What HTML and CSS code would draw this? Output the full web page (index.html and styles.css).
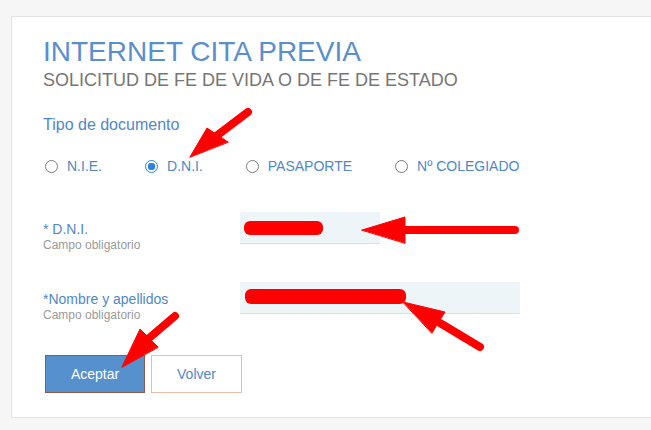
FILE: index.html
```html
<!DOCTYPE html>
<html lang="es">
<head>
<meta charset="UTF-8">
<meta name="viewport" content="width=device-width, initial-scale=1.0">
<title>Internet Cita Previa</title>
<link rel="stylesheet" href="styles.css">
</head>
<body>
<div class="panel">
    <h1>INTERNET CITA PREVIA</h1>
    <h2>SOLICITUD DE FE DE VIDA O DE FE DE ESTADO</h2>

    <p class="group-title">Tipo de documento</p>
    <div class="doc-types">
        <label class="doc-type"><input type="radio" name="tipo" value="nie"><span>N.I.E.</span></label>
        <label class="doc-type"><input type="radio" name="tipo" value="dni" checked><span>D.N.I.</span></label>
        <label class="doc-type"><input type="radio" name="tipo" value="pas"><span>PASAPORTE</span></label>
        <label class="doc-type"><input type="radio" name="tipo" value="col"><span>Nº COLEGIADO</span></label>
    </div>

    <div class="field">
        <div class="field-label">
            <label for="dni">* D.N.I.</label>
            <small>Campo obligatorio</small>
        </div>
        <input id="dni" class="input-short" type="text">
    </div>

    <div class="field">
        <div class="field-label">
            <label for="nombre">*Nombre y apellidos</label>
            <small>Campo obligatorio</small>
        </div>
        <input id="nombre" class="input-long" type="text">
    </div>

    <div class="actions">
        <button class="btn btn-primary">Aceptar</button>
        <button class="btn btn-secondary">Volver</button>
    </div>
</div>

<!-- marcas rojas sobre la captura -->
<svg class="marks" width="651" height="430" viewBox="0 0 651 430">
    <g fill="#ff0000" stroke="#ff0000" stroke-linecap="round" stroke-linejoin="round">
        <rect x="244" y="221" width="79" height="14" rx="6" stroke="none"/>
        <rect x="245" y="289" width="161" height="15" rx="6" stroke="none"/>

        <line x1="248" y1="112" x2="215" y2="137" stroke-width="8"/>
        <polygon points="190,157 207,128 228,142" stroke-width="1"/>

        <line x1="400" y1="230" x2="515" y2="230" stroke-width="8"/>
        <polygon points="362,230 405,217 405,243" stroke-width="1"/>

        <line x1="440" y1="323" x2="480" y2="347" stroke-width="8"/>
        <polygon points="403,302 445,312 432,333" stroke-width="1"/>

        <line x1="148" y1="339" x2="175" y2="316" stroke-width="8"/>
        <polygon points="122,367 140,329 158,347" stroke-width="1"/>
    </g>
</svg>
</body>
</html>
```

FILE: styles.css
```css
body {
    font-family: "Liberation Sans", Arial, sans-serif;
    margin: 0;
    padding: 16px 0 0 11px;
    background-color: #f6f6f6;
    height: 100vh;
    overflow: hidden;
    position: relative;
    box-sizing: border-box;
}
.panel {
    background-color: #fff;
    border: 1px solid #e2e2e2;
    border-right: none;
    padding: 19px 0 24px 31px;
}
h1 {
    margin: 0;
    font-size: 28px;
    line-height: 32px;
    font-weight: normal;
    color: #5a8fcb;
}
h2 {
    margin: 2px 0 0;
    font-size: 18px;
    line-height: 20px;
    font-weight: normal;
    color: #767676;
}
.group-title {
    margin: 25px 0 0;
    font-size: 16px;
    line-height: 20px;
    color: #4f88c6;
}
.doc-types {
    display: flex;
    gap: 43px;
    margin-top: 21px;
    padding-left: 2px;
}
.doc-type {
    display: flex;
    align-items: center;
    gap: 9px;
    font-size: 14px;
    line-height: 20px;
    color: #4f88c6;
}
.doc-type input {
    appearance: none;
    width: 13px;
    height: 13px;
    margin: 0;
    border: 1px solid #7a7a7a;
    border-radius: 50%;
    box-sizing: border-box;
}
.doc-type input:checked {
    border-color: #2a84e4;
    background: radial-gradient(circle, #2a84e4 0, #2a84e4 3.5px, #fff 4px);
}
.field {
    display: flex;
    align-items: flex-start;
    margin-top: 36px;
}
.field + .field {
    margin-top: 30px;
}
.field-label {
    width: 197px;
    padding-top: 8px;
}
.field-label label {
    display: block;
    font-size: 14px;
    line-height: 18px;
    color: #4f88c6;
}
.field-label small {
    display: block;
    font-size: 12px;
    line-height: 14px;
    color: #9a9a9a;
}
.field input {
    height: 32px;
    border: none;
    border-bottom: 1px solid #d9e0e3;
    background-color: #eef5f8;
    box-sizing: border-box;
    padding: 0 6px;
}
.input-short {
    width: 140px;
}
.input-long {
    width: 280px;
}
.actions {
    display: flex;
    gap: 6px;
    margin-top: 33px;
    padding-left: 2px;
}
.btn {
    height: 38px;
    font-family: inherit;
    font-size: 14px;
    box-sizing: border-box;
    cursor: pointer;
}
.btn-primary {
    width: 100px;
    background-color: #5690cd;
    border: 1px solid #8e5a4c;
    color: #fff;
}
.btn-secondary {
    width: 91px;
    background-color: #fff;
    border: 1px solid #e7bca9;
    color: #4f88c6;
}
.marks {
    position: absolute;
    top: 0;
    left: 0;
}
```
